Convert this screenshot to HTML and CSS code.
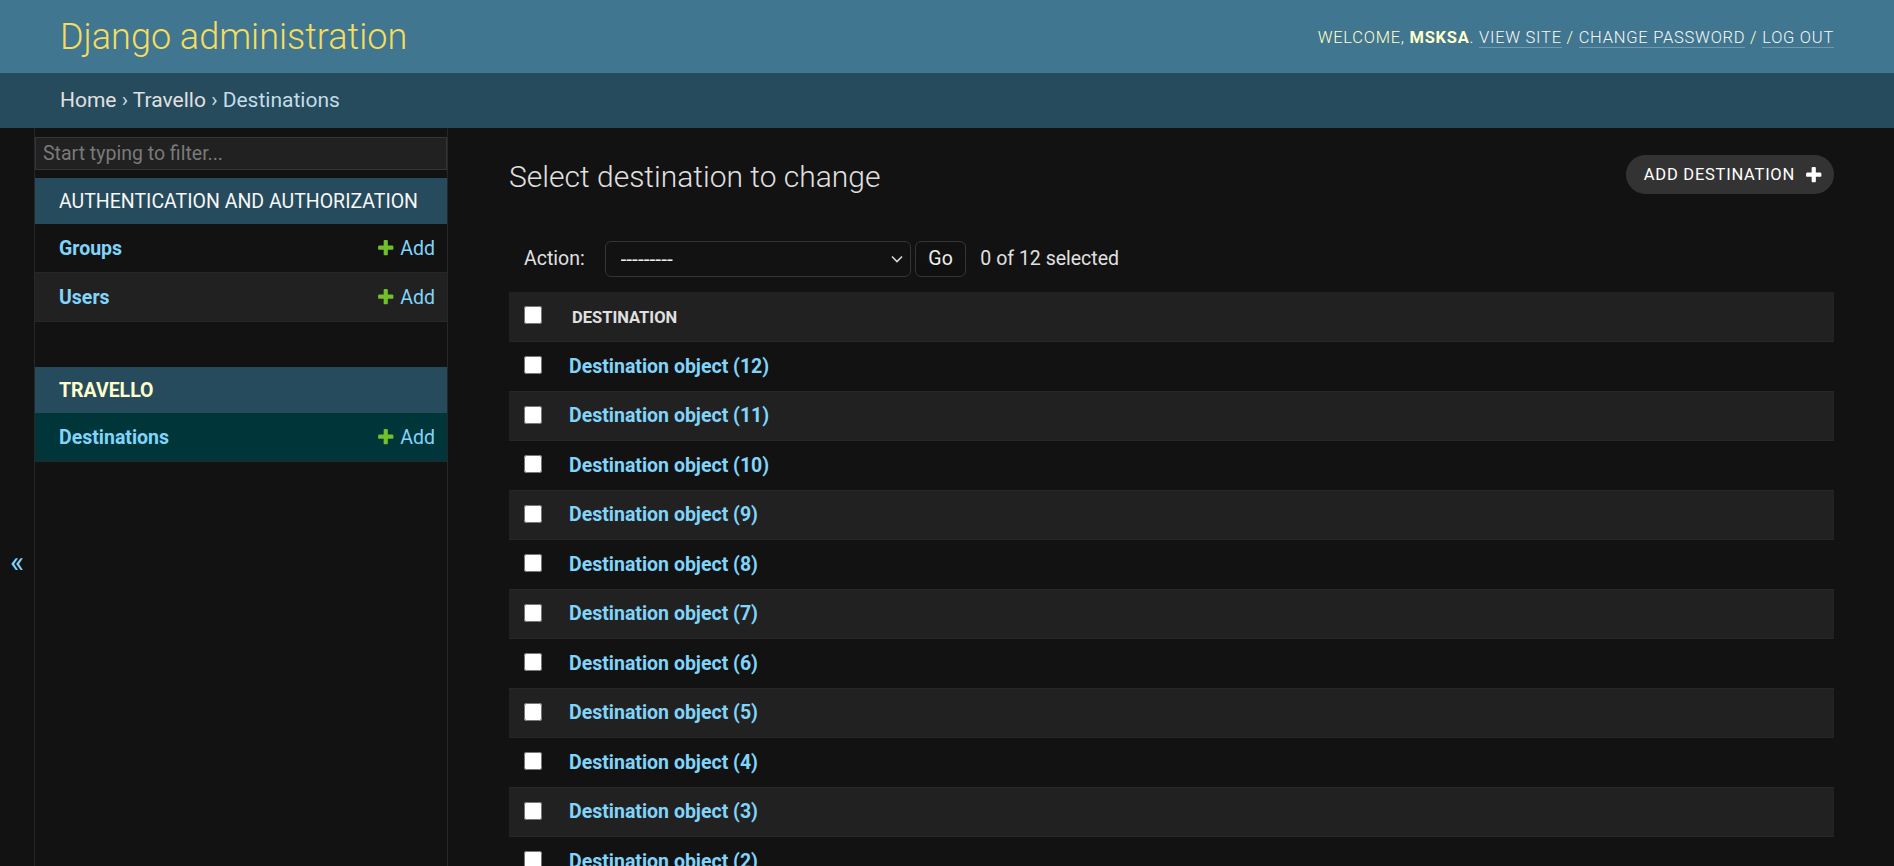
FILE: index.html
```html
<!DOCTYPE html>
<html lang="en">
<head>
<meta charset="utf-8">
<title>Select destination to change | Django site admin</title>
<link rel="stylesheet" href="styles.css">
</head>
<body>
<div class="container">
  <header class="header">
    <div class="branding"><h1 class="site-name"><a href="#">Django administration</a></h1></div>
    <div class="user-tools">Welcome, <strong>msksa</strong>. <a href="#">View site</a> / <a href="#">Change password</a> / <a href="#">Log out</a></div>
  </header>
  <nav class="breadcrumbs"><a href="#">Home</a> &rsaquo; <a href="#">Travello</a> &rsaquo; Destinations</nav>
  <div class="main">
    <button class="toggle-nav" type="button" aria-label="Toggle navigation">&laquo;</button>
    <nav class="sidebar">
      <input class="nav-filter" type="text" placeholder="Start typing to filter...">
      <div class="module">
        <div class="caption"><a href="#">Authentication and Authorization</a></div>
        <div class="row"><a class="model" href="#">Groups</a><a class="addlink" href="#"><svg viewBox="0 0 1792 1792" class="plus"><path fill="#70bf2b" d="M1600 796v192q0 40-28 68t-68 28h-416v416q0 40-28 68t-68 28h-192q-40 0-68-28t-28-68v-416h-416q-40 0-68-28t-28-68v-192q0-40 28-68t68-28h416v-416q0-40 28-68t68-28h192q40 0 68 28t28 68v416h416q40 0 68 28t28 68z"/></svg>Add</a></div>
        <div class="row even"><a class="model" href="#">Users</a><a class="addlink" href="#"><svg viewBox="0 0 1792 1792" class="plus"><path fill="#70bf2b" d="M1600 796v192q0 40-28 68t-68 28h-416v416q0 40-28 68t-68 28h-192q-40 0-68-28t-28-68v-416h-416q-40 0-68-28t-28-68v-192q0-40 28-68t68-28h416v-416q0-40 28-68t68-28h192q40 0 68 28t28 68v416h416q40 0 68 28t28 68z"/></svg>Add</a></div>
      </div>
      <div class="module current-app">
        <div class="caption"><a href="#">Travello</a></div>
        <div class="row current-model"><a class="model" href="#">Destinations</a><a class="addlink" href="#"><svg viewBox="0 0 1792 1792" class="plus"><path fill="#70bf2b" d="M1600 796v192q0 40-28 68t-68 28h-416v416q0 40-28 68t-68 28h-192q-40 0-68-28t-28-68v-416h-416q-40 0-68-28t-28-68v-192q0-40 28-68t68-28h416v-416q0-40 28-68t68-28h192q40 0 68 28t28 68v416h416q40 0 68 28t28 68z"/></svg>Add</a></div>
      </div>
    </nav>
    <div class="content">
      <div class="content-head">
        <h1>Select destination to change</h1>
        <a class="add-btn" href="#">Add destination<svg viewBox="0 0 1792 1792" class="plus"><path fill="#ffffff" d="M1600 796v192q0 40-28 68t-68 28h-416v416q0 40-28 68t-68 28h-192q-40 0-68-28t-28-68v-416h-416q-40 0-68-28t-28-68v-192q0-40 28-68t68-28h416v-416q0-40 28-68t68-28h192q40 0 68 28t28 68v416h416q40 0 68 28t28 68z"/></svg></a>
      </div>
      <div class="actions">
        <label>Action: <span class="select-wrap"><select name="action"><option>---------</option><option>Delete selected destinations</option></select><svg class="chevron" viewBox="0 0 12 8"><path d="M1 1.5 6 6.5 11 1.5" fill="none" stroke="#d8d8d8" stroke-width="1.6"/></svg></span></label> <button class="go" type="button">Go</button> <span class="action-counter">0 of 12 selected</span>
      </div>
      <table class="results">
        <thead>
          <tr><th class="cb-col"><span><input type="checkbox"></span></th><th><span>Destination</span></th></tr>
        </thead>
        <tbody>
          <tr><td class="cb-col"><input type="checkbox"></td><th><a href="#">Destination object (12)</a></th></tr>
          <tr><td class="cb-col"><input type="checkbox"></td><th><a href="#">Destination object (11)</a></th></tr>
          <tr><td class="cb-col"><input type="checkbox"></td><th><a href="#">Destination object (10)</a></th></tr>
          <tr><td class="cb-col"><input type="checkbox"></td><th><a href="#">Destination object (9)</a></th></tr>
          <tr><td class="cb-col"><input type="checkbox"></td><th><a href="#">Destination object (8)</a></th></tr>
          <tr><td class="cb-col"><input type="checkbox"></td><th><a href="#">Destination object (7)</a></th></tr>
          <tr><td class="cb-col"><input type="checkbox"></td><th><a href="#">Destination object (6)</a></th></tr>
          <tr><td class="cb-col"><input type="checkbox"></td><th><a href="#">Destination object (5)</a></th></tr>
          <tr><td class="cb-col"><input type="checkbox"></td><th><a href="#">Destination object (4)</a></th></tr>
          <tr><td class="cb-col"><input type="checkbox"></td><th><a href="#">Destination object (3)</a></th></tr>
          <tr><td class="cb-col"><input type="checkbox"></td><th><a href="#">Destination object (2)</a></th></tr>
          <tr><td class="cb-col"><input type="checkbox"></td><th><a href="#">Destination object (1)</a></th></tr>
        </tbody>
      </table>
    </div>
  </div>
</div>
</body>
</html>
```

FILE: styles.css
```css
* { box-sizing: border-box; }
html, body { margin: 0; padding: 0; }
body {
  font-family: Roboto, "Noto Sans", "Liberation Sans", sans-serif;
  font-size: 21px;
  color: #eeeeee;
  background: #121212;
}
a { color: #81d4fa; text-decoration: none; }

/* Header */
.header {
  display: flex;
  justify-content: space-between;
  align-items: center;
  height: 73px;
  padding: 2px 60px 0;
  background: #417690;
  color: #ffffcc;
}
.site-name {
  margin: 0 30px 0 0;
  font-weight: 300;
  font-size: 36px;
  line-height: 43px;
}
.site-name a { color: #f5dd5d; }
.user-tools {
  font-weight: 300;
  font-size: 16.5px;
  letter-spacing: 0.75px;
  text-transform: uppercase;
  text-align: right;
}
.user-tools strong { font-weight: 700; }
.user-tools a {
  color: #f7f7f7;
  border-bottom: 1px solid rgba(255, 255, 255, 0.25);
}

/* Breadcrumbs */
.breadcrumbs {
  height: 55px;
  padding: 15px 60px;
  background: #264b5d;
  color: #c4dce8;
  font-size: 21px;
  line-height: 25px;
}
.breadcrumbs a { color: #e0e0e0; }

/* Main */
.main { display: flex; }
.toggle-nav {
  flex: 0 0 35px;
  width: 35px;
  height: 100vh;
  align-self: flex-start;
  display: flex;
  align-items: center;
  justify-content: center;
  padding: 0;
  border: 0;
  border-right: 1px solid #272727;
  background: #121212;
  color: #81d4fa;
  font-family: Roboto, "Noto Sans", sans-serif;
  font-size: 30px;
}
.sidebar {
  flex: 0 0 413px;
  border-top: 1px solid transparent;
  border-right: 1px solid #272727;
  background: #121212;
}
.nav-filter {
  display: block;
  width: 100%;
  margin: 8px 0;
  padding: 3px 7px;
  height: 33px;
  border: 1px solid #353535;
  background: #212121;
  color: #eeeeee;
  font-family: Roboto, "Noto Sans", sans-serif;
  font-size: 19.5px;
  line-height: 25px;
  outline: none;
}
.nav-filter::placeholder { color: #7a7a7a; }

.module { margin-bottom: 45px; }
.caption {
  padding: 12.5px 12px 11.5px 24px;
  background: #264b5d;
  font-size: 19.5px;
  line-height: 22px;
  text-transform: uppercase;
  white-space: nowrap;
}
.caption a { color: #f7f7f7; }
.current-app .caption a { color: #ffffcc; font-weight: 700; }
.row {
  display: flex;
  justify-content: space-between;
  align-items: flex-start;
  padding: 12.5px 12px 11.5px 24px;
  border-bottom: 1px solid #272727;
  font-size: 19.5px;
  line-height: 24px;
}
.row.even { background: #212121; }
.row.current-model { background: #00363a; }
.model { font-weight: 700; }
.addlink { display: flex; align-items: flex-start; }
.addlink .plus { width: 19.5px; height: 19.5px; margin: 1.5px 4.5px 0 0; }

/* Content */
.content { flex: 1 1 auto; min-width: 0; padding: 30px 60px 30px 61px; }
.content-head {
  display: flex;
  justify-content: space-between;
  align-items: flex-start;
  margin-bottom: 32px;
}
.content-head h1 {
  margin: 0;
  padding-top: 1px;
  font-weight: 300;
  font-size: 30px;
  line-height: 35px;
  color: #e0e0e0;
}
.add-btn {
  display: flex;
  align-items: center;
  height: 39px;
  margin-top: -3px;
  padding: 0 10.5px 0 18px;
  border-radius: 22px;
  background: #333333;
  color: #ffffff;
  font-size: 16.5px;
  letter-spacing: 0.75px;
  text-transform: uppercase;
}
.add-btn .plus { width: 19.5px; height: 19.5px; margin-left: 9px; }

.actions {
  padding: 15px;
  line-height: 36px;
  font-size: 19.5px;
  color: #e0e0e0;
}
.select-wrap {
  position: relative;
  display: inline-block;
  vertical-align: top;
  margin-left: 15px;
}
.select-wrap select {
  display: block;
  width: 306px;
  height: 36px;
  margin: 0;
  padding: 0 30px 0 15px;
  border: 1px solid #353535;
  border-radius: 6px;
  background: #121212;
  color: #eeeeee;
  appearance: none;
  -webkit-appearance: none;
  font-family: Roboto, "Noto Sans", sans-serif;
  font-size: 21px;
}
.chevron {
  position: absolute;
  right: 8px;
  top: 14px;
  width: 12px;
  height: 8px;
  pointer-events: none;
}
.actions .go {
  vertical-align: top;
  height: 36px;
  margin-left: 0;
  padding: 0 12px;
  border: 1px solid #353535;
  border-radius: 6px;
  background: #121212;
  color: #eeeeee;
  box-shadow: 0 -22px 30px -15px rgba(0, 0, 0, 0.15) inset;
  font-family: Roboto, "Noto Sans", sans-serif;
  font-size: 19.5px;
  line-height: 1;
}
.action-counter { margin: 0 9.75px; }

.results {
  width: 100%;
  border-collapse: collapse;
}
.results thead th {
  padding: 0;
  background: #212121;
  color: #e0e0e0;
  font-size: 16.5px;
  font-weight: 700;
  text-transform: uppercase;
  text-align: left;
  vertical-align: top;
  border-bottom: 1px solid #272727;
}
.results thead th span { display: block; padding: 12.5px 15px 11.5px; line-height: 25px; }
.results thead th.cb-col span { padding: 14px 0 0 15px; height: 49px; }
.results .cb-col { width: 48px; }
.results input[type=checkbox] { display: block; width: 18px; height: 18px; margin: 0; }
.results tbody td.cb-col { padding: 14px 0 0 15px; vertical-align: top; border-bottom: 1px solid #272727; }
.results tbody th {
  padding: 12.5px 12px 11.5px;
  text-align: left;
  font-size: 19.5px;
  line-height: 24.5px;
  font-weight: 700;
  vertical-align: top;
  border-bottom: 1px solid #272727;
}
.results tbody tr:nth-child(even) { background: #212121; }
```
